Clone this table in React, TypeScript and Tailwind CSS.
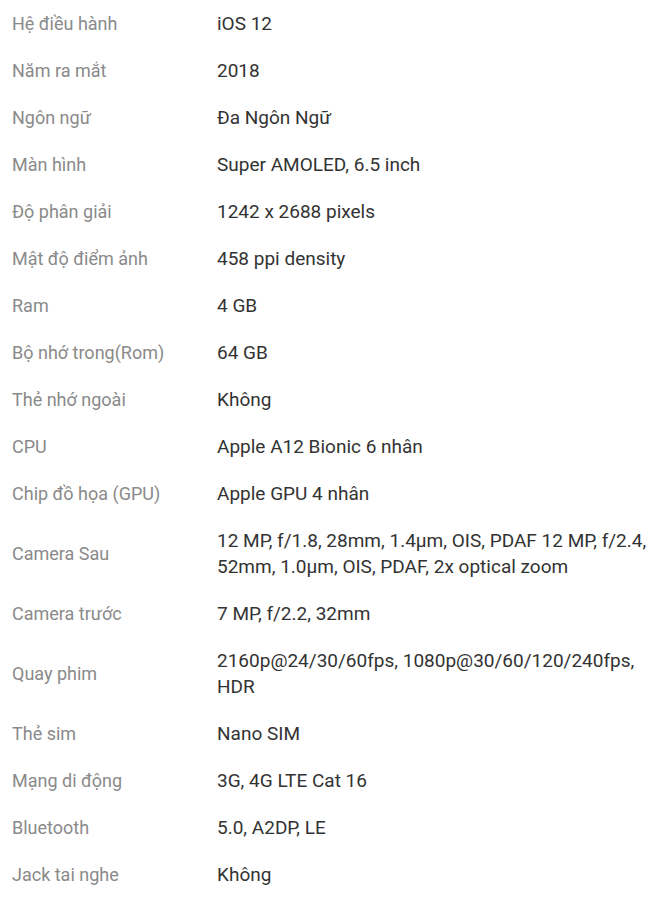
const specs: [string, string][] = [
  ["Hệ điều hành", "iOS 12"],
  ["Năm ra mắt", "2018"],
  ["Ngôn ngữ", "Đa Ngôn Ngữ"],
  ["Màn hình", "Super AMOLED, 6.5 inch"],
  ["Độ phân giải", "1242 x 2688 pixels"],
  ["Mật độ điểm ảnh", "458 ppi density"],
  ["Ram", "4 GB"],
  ["Bộ nhớ trong(Rom)", "64 GB"],
  ["Thẻ nhớ ngoài", "Không"],
  ["CPU", "Apple A12 Bionic 6 nhân"],
  ["Chip đồ họa (GPU)", "Apple GPU 4 nhân"],
  ["Camera Sau", "12 MP, f/1.8, 28mm, 1.4µm, OIS, PDAF 12 MP, f/2.4, 52mm, 1.0µm, OIS, PDAF, 2x optical zoom"],
  ["Camera trước", "7 MP, f/2.2, 32mm"],
  ["Quay phim", "2160p@24/30/60fps, 1080p@30/60/120/240fps, HDR"],
  ["Thẻ sim", "Nano SIM"],
  ["Mạng di động", "3G, 4G LTE Cat 16"],
  ["Bluetooth", "5.0, A2DP, LE"],
  ["Jack tai nghe", "Không"],
];

export default function App() {
  return (
    <div className="min-h-screen bg-white font-['Roboto',sans-serif]">
      <div className="flex flex-col">
        {specs.map(([label, value]) => (
          <div key={label} className="flex items-center py-[10.5px] pl-3 pr-2">
            <div className="w-[205px] shrink-0 text-[18px] leading-[26px] text-[#8a8a8a]">{label}</div>
            <div className="flex-1 text-[19px] leading-[26px] text-[#333]">{value}</div>
          </div>
        ))}
      </div>
    </div>
  );
}
